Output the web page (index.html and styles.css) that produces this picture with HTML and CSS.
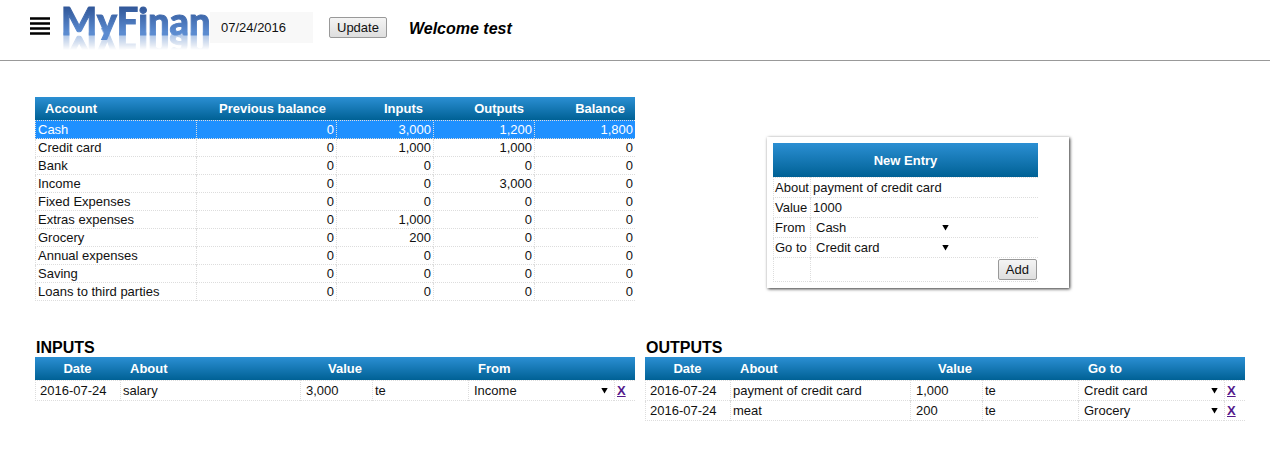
FILE: index.html
```html
<!DOCTYPE html>
<html lang="en">
<head>
<meta charset="utf-8">
<title>MyFinance</title>
<link rel="stylesheet" href="styles.css">
</head>
<body>
<header class="topbar">
  <button class="menu" type="button" aria-label="Menu">
    <svg width="20" height="18" viewBox="0 0 20 18"><path d="M0 1.5h20M0 6.5h20M0 11.5h20M0 16.5h20" stroke="#000" stroke-width="2.6"/></svg>
  </button>
  <div class="logo"><span class="logo-text">MyFinan</span></div>
  <input class="date" type="text" value="07/24/2016" aria-label="Date">
  <button class="btn update" type="button">Update</button>
  <strong class="welcome">Welcome test</strong>
</header>
<main class="page">
  <table class="grid accounts">
    <colgroup><col class="c-name"><col class="c-prev"><col class="c-in"><col class="c-out"><col></colgroup>
    <thead><tr><th>Account</th><th>Previous balance</th><th>Inputs</th><th>Outputs</th><th>Balance</th></tr></thead>
    <tbody>
      <tr class="selected"><td>Cash</td><td>0</td><td>3,000</td><td>1,200</td><td>1,800</td></tr>
      <tr><td>Credit card</td><td>0</td><td>1,000</td><td>1,000</td><td>0</td></tr>
      <tr><td>Bank</td><td>0</td><td>0</td><td>0</td><td>0</td></tr>
      <tr><td>Income</td><td>0</td><td>0</td><td>3,000</td><td>0</td></tr>
      <tr><td>Fixed Expenses</td><td>0</td><td>0</td><td>0</td><td>0</td></tr>
      <tr><td>Extras expenses</td><td>0</td><td>1,000</td><td>0</td><td>0</td></tr>
      <tr><td>Grocery</td><td>0</td><td>200</td><td>0</td><td>0</td></tr>
      <tr><td>Annual expenses</td><td>0</td><td>0</td><td>0</td><td>0</td></tr>
      <tr><td>Saving</td><td>0</td><td>0</td><td>0</td><td>0</td></tr>
      <tr><td>Loans to third parties</td><td>0</td><td>0</td><td>0</td><td>0</td></tr>
    </tbody>
  </table>

  <form class="card">
    <table class="grid entry">
      <colgroup><col class="c-label"><col></colgroup>
      <thead><tr><th colspan="2">New Entry</th></tr></thead>
      <tbody>
        <tr><td><label for="about">About</label></td><td><input id="about" type="text" value="payment of credit card"></td></tr>
        <tr><td><label for="value">Value</label></td><td><input id="value" type="text" value="1000"></td></tr>
        <tr><td><label for="from">From</label></td><td><span class="pick"><select id="from"><option>Cash</option></select></span></td></tr>
        <tr><td><label for="goto">Go to</label></td><td><span class="pick"><select id="goto"><option>Credit card</option></select></span></td></tr>
        <tr class="actions"><td></td><td><button class="btn" type="button">Add</button></td></tr>
      </tbody>
    </table>
  </form>

  <section>
    <h2>INPUTS</h2>
    <table class="grid moves">
      <colgroup><col class="c-date"><col class="c-about"><col class="c-value"><col class="c-user"><col><col class="c-del"></colgroup>
      <thead><tr><th>Date</th><th>About</th><th>Value</th><th></th><th colspan="2">From</th></tr></thead>
      <tbody>
        <tr><td><input type="text" value="2016-07-24" aria-label="Date"></td><td><input type="text" value="salary" aria-label="About"></td><td><input type="text" value="3,000" aria-label="Value"></td><td>te</td><td><span class="pick"><select aria-label="From"><option>Income</option></select></span></td><td><a href="#">X</a></td></tr>
      </tbody>
    </table>
  </section>

  <section>
    <h2>OUTPUTS</h2>
    <table class="grid moves">
      <colgroup><col class="c-date"><col class="c-about"><col class="c-value"><col class="c-user"><col><col class="c-del"></colgroup>
      <thead><tr><th>Date</th><th>About</th><th>Value</th><th></th><th colspan="2">Go to</th></tr></thead>
      <tbody>
        <tr><td><input type="text" value="2016-07-24" aria-label="Date"></td><td><input type="text" value="payment of credit card" aria-label="About"></td><td><input type="text" value="1,000" aria-label="Value"></td><td>te</td><td><span class="pick"><select aria-label="Go to"><option>Credit card</option></select></span></td><td><a href="#">X</a></td></tr>
        <tr><td><input type="text" value="2016-07-24" aria-label="Date"></td><td><input type="text" value="meat" aria-label="About"></td><td><input type="text" value="200" aria-label="Value"></td><td>te</td><td><span class="pick"><select aria-label="Go to"><option>Grocery</option></select></span></td><td><a href="#">X</a></td></tr>
      </tbody>
    </table>
  </section>
</main>
</body>
</html>
```
FILE: styles.css
```css
* { box-sizing: border-box; }
body {
  margin: 0;
  background: #fff;
  color: #111;
  font: 13px/16px "Liberation Sans", Arial, sans-serif;
}
input, select, button { font: inherit; color: inherit; }

.topbar {
  display: flex;
  align-items: flex-start;
  height: 61px;
  padding-left: 30px;
  border-bottom: 1px solid #999;
}
.menu {
  margin: 17px 11px 0 0;
  padding: 0;
  border: 0;
  background: none;
  line-height: 0;
}
.logo { width: 149px; }
.logo-text {
  display: block;
  width: 152px;
  height: 40px;
  font: 900 38px/40px Lato, sans-serif;
  color: transparent;
  -webkit-text-stroke: 1px transparent;
  background: linear-gradient(#2f5597 15%, #5b8bd0 80%);
  -webkit-background-clip: text;
  background-clip: text;
  -webkit-box-reflect: below -12px linear-gradient(transparent 45%, rgba(0, 0, 0, 0.7));
}
.date {
  width: 103px;
  height: 31px;
  margin-top: 12px;
  padding: 0 11px;
  border: 0;
  background: #f8f8f8;
}
.btn {
  height: 21px;
  padding: 0 7px;
  border: 1px solid #999;
  border-radius: 2px;
  background: linear-gradient(#f4f4f4, #dedede);
}
.update { margin: 17px 22px 0 16px; }
.welcome {
  margin-top: 19px;
  font-size: 16px;
  line-height: 20px;
  font-style: italic;
  color: #000;
}

.page {
  display: grid;
  grid-template-columns: 1fr 1fr;
  align-items: start;
  gap: 36px 10px;
  padding: 36px 25px 36px 35px;
}
h2 {
  margin: 0;
  padding: 1px 0 0 1px;
  font-size: 16px;
  line-height: 19px;
  color: #000;
}

.grid {
  width: 100%;
  table-layout: fixed;
  border-collapse: separate;
  border-spacing: 0;
}
.grid thead tr { background: linear-gradient(#2b8fd3, #006195); }
.grid th {
  height: 23px;
  padding: 0 10px;
  color: #fff;
  text-align: left;
}
.grid td {
  padding: 0 2px;
  border-left: 1px dotted #ddd;
  border-bottom: 1px dotted #ddd;
}
.grid tbody tr:first-child td { border-top: 1px dotted #ddd; }
.c-name { width: 161px; }
.c-prev { width: 140px; }
.c-in { width: 97px; }
.c-out { width: 101px; }
.c-label { width: 37px; }
.c-date { width: 85px; }
.c-about { width: 180px; }
.c-value { width: 72px; }
.c-user { width: 96px; }
.c-del { width: 21px; }

.accounts td { height: 18px; }
.accounts tr:first-child td { height: 19px; }
.accounts th + th, .accounts td + td { text-align: right; }
.accounts .selected { background: #1e90ff; color: #fff; }

.grid input, .pick select {
  display: block;
  width: 100%;
  height: 18px;
  margin: 0;
  padding: 0;
  border: 0;
  background: none;
}
.pick { display: grid; }
.pick select {
  grid-area: 1 / 1;
  padding-left: 3px;
  appearance: none;
}
.pick::after {
  content: "";
  grid-area: 1 / 1;
  place-self: center end;
  width: 7px;
  height: 6px;
  margin-right: 4px;
  background: #000;
  clip-path: polygon(0 0, 100% 0, 50% 100%);
  pointer-events: none;
}

.card {
  width: 302px;
  margin: 40px 0 0 122px;
  padding: 6px 31px 6px 6px;
  background: #fff;
  box-shadow: 1px 1px 3px #333;
}
.entry td { height: 20px; }
.entry tr:first-child td { height: 21px; }
.entry td:first-child { padding: 0 0 0 1px; }
.entry th { height: 34px; padding-top: 2px; text-align: center; }
.entry .pick { width: 140px; }
.entry .actions td { height: 24px; padding: 0 1px; text-align: right; }

.moves td { height: 20px; }
.moves tr:first-child td { height: 21px; }
.moves th:first-child { text-align: center; }
.moves th:nth-child(3) { text-align: right; }
.moves td:first-child { padding-left: 4px; }
.moves td:nth-child(3) { padding-left: 5px; }
.moves a {
  color: #551a8b;
  font-weight: bold;
}
```
